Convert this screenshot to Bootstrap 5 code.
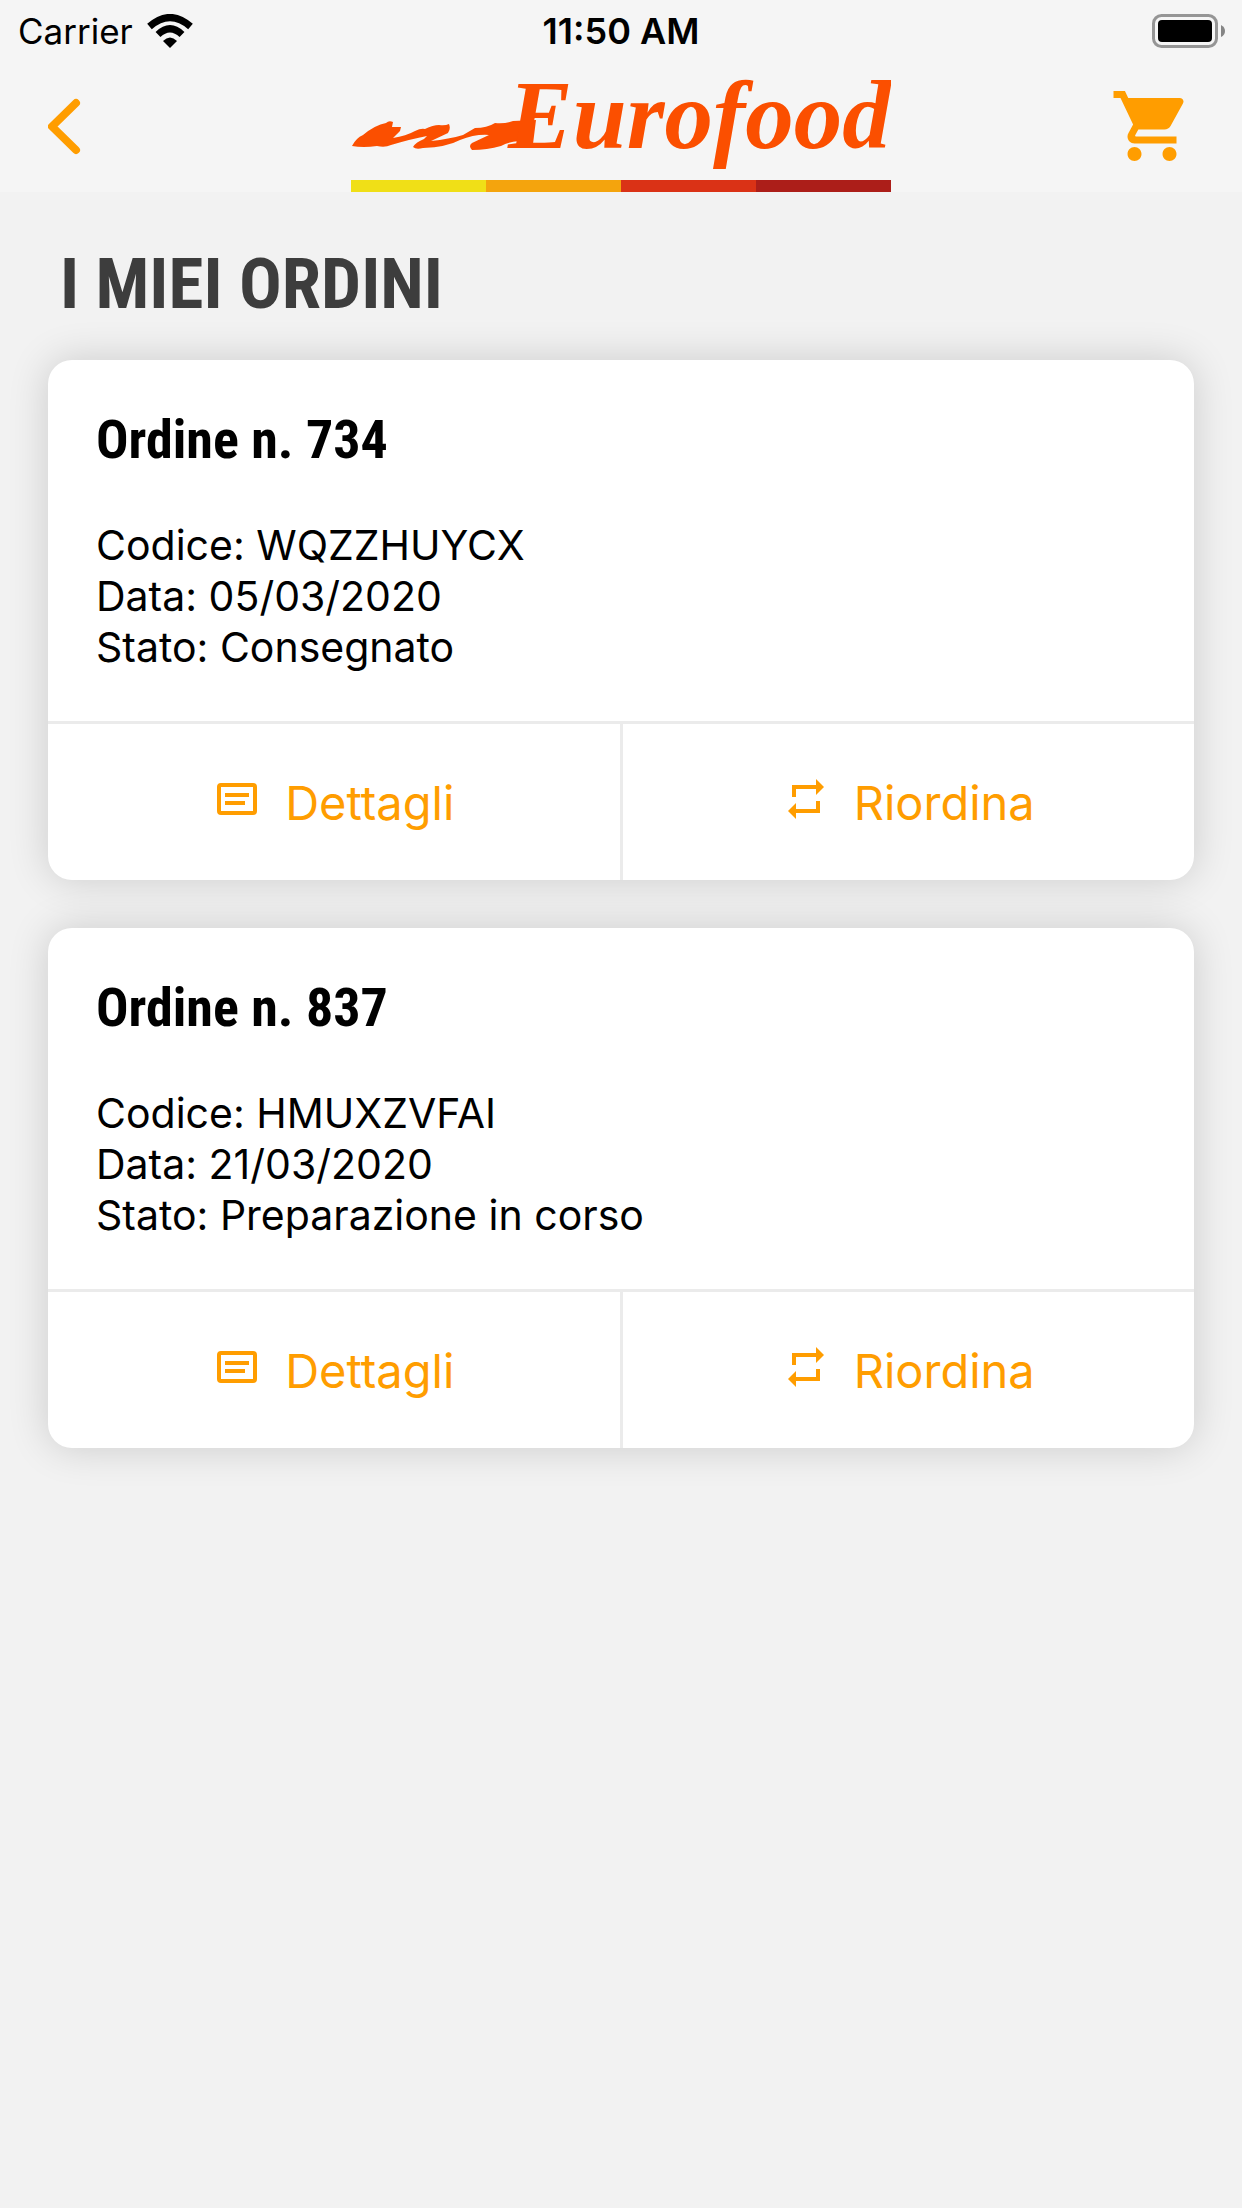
<!DOCTYPE html>
<html lang="it">
<head>
<meta charset="utf-8">
<meta name="viewport" content="width=device-width, initial-scale=1">
<title>Eurofood - I miei ordini</title>
<link href="https://cdn.jsdelivr.net/npm/bootstrap@5.3.0/dist/css/bootstrap.min.css" rel="stylesheet">
<style>
  body { background: #f2f2f2; color: #000; font-family: Inter, "Liberation Sans", sans-serif; }
  .app-header { background: #f5f5f5; }
  .status-bar { height: 60px; padding: 2px 18px 0; font-size: 36px; line-height: 58px; }
  .status-side { flex: 1 1 0; gap: 14px; }
  .carrier { font-size: 35px; }
  .nav-row { height: 132px; padding: 0 48px; }
  .icon-btn { color: #ff9d00; line-height: 0; }
  .condensed { font-family: "Roboto Condensed", "Liberation Sans Narrow", Roboto, sans-serif; font-weight: 700; }
  .page-title { font-size: 71px; line-height: 84px; color: #3d3d3d; padding: 0 12px; margin-bottom: 34px; }
  .page-main { padding: 50px 48px 48px; }
  .order-list { gap: 48px; }
  .order-card { border: 0; border-radius: 24px; box-shadow: 0 0 40px rgba(0, 0, 0, .16); }
  .order-body { padding: 48px; }
  .order-title { font-size: 54px; line-height: 64px; margin-bottom: 48px; }
  .order-info { font-size: 41px; line-height: 51px; }
  .order-actions { border-top: 3px solid #ebebeb; }
  .order-action { height: 156px; flex: 1 1 0; gap: 24px; padding: 2px 0 0; font-size: 47px; color: #ff9d00; border: 0; border-radius: 0; }
  .order-action:hover { color: #e08a00; }
  .order-action + .order-action { border-left: 3px solid #ebebeb; }
  .order-action svg { margin-bottom: 8px; }
</style>
</head>
<body>
<header class="app-header">
  <div class="status-bar d-flex align-items-center">
    <div class="status-side d-flex align-items-center">
      <span class="carrier">Carrier</span>
      <svg width="46" height="34" viewBox="0 0 46 34" aria-hidden="true">
        <g fill="none" stroke="#000" stroke-width="7"><path d="M2.500 12.500Q23-5.500 43.500 12.500"/><path d="M11 20.500Q23 9 35 20.500"/></g>
        <path d="M16 27Q23 20 30 27L23 34Z"/>
      </svg>
    </div>
    <span class="fw-semibold">11:50 AM</span>
    <div class="status-side d-flex justify-content-end">
      <svg width="72" height="34" viewBox="0 0 72 34" overflow="visible" aria-hidden="true">
        <rect x="1.500" y="1.500" width="63" height="31" rx="8" fill="none" stroke="#959595" stroke-width="3"/>
        <rect x="6" y="6" width="54" height="22" rx="4"/>
        <path d="M69 11q4 2 4 6t-4 6z" fill="#858585"/>
      </svg>
    </div>
  </div>
  <nav class="nav-row d-flex align-items-center justify-content-between">
    <button type="button" class="icon-btn btn p-0 border-0" aria-label="Indietro">
      <svg width="84" height="84" viewBox="0 0 84 84"><path d="M28 19L4 42.500L28 66" fill="none" stroke="currentColor" stroke-width="8" stroke-linecap="round" stroke-linejoin="round"/></svg>
    </button>
    <svg width="540" height="132" viewBox="0 0 540 132" role="img" aria-label="Eurofood">
      <path fill="#fb4f00" d="M1 86Q5 78 12 75Q24 65 35 63Q38 60 42 62L41 67L50 67L49 71L42 78Q55 76 64 71Q70 68 74 69Q82 65 88 65Q94 66 98 64Q100 69 97 73L80 81Q98 79 112 75L124 68Q136 68 144 63Q154 64 162 61L185 60L182 84L168 81Q157 82 150 86Q136 90 121 90Q117 86 121 83L138 75Q124 74 109 80Q96 87 72 88Q65 90 62 87Q65 82 73 79L76 76Q60 79 40 85Q34 88 26 86Q12 88 1 86Z"/>
      <text x="157" y="88" font-family="'Liberation Serif', serif" font-weight="700" font-style="italic" font-size="97" fill="#fb4f00">Eurofood</text>
      <path fill="#f0df17" d="M0 120h135v12H0z"/>
      <path fill="#f4a40d" d="M135 120h135v12H135z"/>
      <path fill="#da3216" d="M270 120h135v12H270z"/>
      <path fill="#ac1e19" d="M405 120h135v12H405z"/>
    </svg>
    <button type="button" class="icon-btn btn p-0 border-0" aria-label="Carrello">
      <svg width="84" height="84" viewBox="0 0 24 24" fill="currentColor"><path d="M7 18c-1.100 0-1.990.9-1.990 2S5.900 22 7 22s2-.9 2-2-.9-2-2-2zM1 2v2h2l3.600 7.590-1.350 2.450c-.16.280-.25.610-.25.960 0 1.100.9 2 2 2h12v-2H7.420c-.14 0-.25-.11-.25-.25l.030-.12.900-1.630h7.450c.75 0 1.410-.41 1.750-1.030l3.580-6.490A1 1 0 0 0 20 4H5.210l-.94-2H1zm16 16c-1.100 0-1.990.9-1.990 2s.89 2 1.990 2 2-.9 2-2-.9-2-2-2z"/></svg>
    </button>
  </nav>
</header>

<main class="page-main">
  <h1 class="page-title condensed">I MIEI ORDINI</h1>
  <div class="order-list d-flex flex-column">
    <article class="order-card card">
      <div class="order-body">
        <h2 class="order-title condensed">Ordine n. 734</h2>
        <div class="order-info">
          <div>Codice: WQZZHUYCX</div>
          <div>Data: 05/03/2020</div>
          <div>Stato: Consegnato</div>
        </div>
      </div>
      <div class="order-actions d-flex">
        <button type="button" class="order-action btn d-flex align-items-center justify-content-center">
          <svg width="48" height="48" viewBox="0 0 48 48" fill="none" stroke="currentColor" stroke-width="4" aria-hidden="true"><rect x="6" y="10" width="36" height="28" rx="2"/><path d="M12 20h24M12 28h20"/></svg>
          <span>Dettagli</span>
        </button>
        <button type="button" class="order-action btn d-flex align-items-center justify-content-center">
          <svg width="48" height="48" viewBox="0 0 48 48" fill="currentColor" aria-hidden="true"><path d="M10 22V10h24V4l8 8-8 8v-6H14v8zM38 26v12H14v6l-8-8 8-8v6h20v-8z"/></svg>
          <span>Riordina</span>
        </button>
      </div>
    </article>
    <article class="order-card card">
      <div class="order-body">
        <h2 class="order-title condensed">Ordine n. 837</h2>
        <div class="order-info">
          <div>Codice: HMUXZVFAI</div>
          <div>Data: 21/03/2020</div>
          <div>Stato: Preparazione in corso</div>
        </div>
      </div>
      <div class="order-actions d-flex">
        <button type="button" class="order-action btn d-flex align-items-center justify-content-center">
          <svg width="48" height="48" viewBox="0 0 48 48" fill="none" stroke="currentColor" stroke-width="4" aria-hidden="true"><rect x="6" y="10" width="36" height="28" rx="2"/><path d="M12 20h24M12 28h20"/></svg>
          <span>Dettagli</span>
        </button>
        <button type="button" class="order-action btn d-flex align-items-center justify-content-center">
          <svg width="48" height="48" viewBox="0 0 48 48" fill="currentColor" aria-hidden="true"><path d="M10 22V10h24V4l8 8-8 8v-6H14v8zM38 26v12H14v6l-8-8 8-8v6h20v-8z"/></svg>
          <span>Riordina</span>
        </button>
      </div>
    </article>
  </div>
</main>
<script src="https://cdn.jsdelivr.net/npm/bootstrap@5.3.0/dist/js/bootstrap.bundle.min.js"></script>
</body>
</html>
